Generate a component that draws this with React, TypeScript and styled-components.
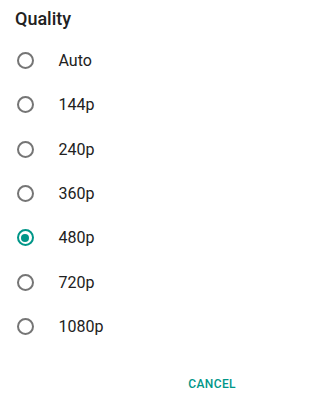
import { FC, useState } from "react"
import styled, { createGlobalStyle } from "styled-components";

const Global = createGlobalStyle`
  html, body {
    margin: 0;
    padding: 0;
    background: #fff;
    font-family: Roboto, "Liberation Sans", sans-serif;
  }
`

const options = ["Auto", "144p", "240p", "360p", "480p", "720p", "1080p"];

const App: FC = () => {
  const [selected, setSelected] = useState("480p");
  return (
    <>
      <Global />
      <Dialog>
        <Title>Quality</Title>
        <List>
          {options.map((o) => (
            <Row key={o} onClick={() => setSelected(o)}>
              <Radio checked={o === selected} />
              <Label>{o}</Label>
            </Row>
          ))}
        </List>
        <Actions>
          <Button>Cancel</Button>
        </Actions>
      </Dialog>
    </>
  )
}

export default App;

const Dialog = styled.div`
  width: 252px;
  height: 400px;
  box-sizing: border-box;
  padding-top: 7px;
  display: flex;
  flex-direction: column;
`
const Title = styled.div`
  padding: 0 15px;
  font-size: 18px;
  line-height: 24px;
  font-weight: 500;
  color: #212121;
`
const List = styled.div`
  margin-top: 7.5px;
  display: flex;
  flex-direction: column;
`
const Row = styled.div`
  height: 44.33px;
  display: flex;
  align-items: center;
  padding-left: 16.5px;
  cursor: pointer;
`
const Radio = styled.span<{ checked: boolean }>`
  width: 17px;
  height: 17px;
  box-sizing: border-box;
  border-radius: 50%;
  border: 2px solid ${(p) => (p.checked ? "#009688" : "#757575")};
  display: flex;
  align-items: center;
  justify-content: center;
  &::after {
    content: "";
    display: ${(p) => (p.checked ? "block" : "none")};
    width: 8px;
    height: 8px;
    border-radius: 50%;
    background: #009688;
  }
`
const Label = styled.span`
  margin-left: 25px;
  font-size: 16px;
  color: #212121;
`
const Actions = styled.div`
  margin-top: auto;
  height: 36px;
  display: flex;
  justify-content: flex-end;
  align-items: center;
  padding-right: 8px;
`
const Button = styled.button`
  border: none;
  background: none;
  padding: 3px 8px 0;
  height: 36px;
  font-family: inherit;
  font-size: 12px;
  font-weight: 500;
  letter-spacing: 0.4px;
  text-transform: uppercase;
  color: #009688;
`
